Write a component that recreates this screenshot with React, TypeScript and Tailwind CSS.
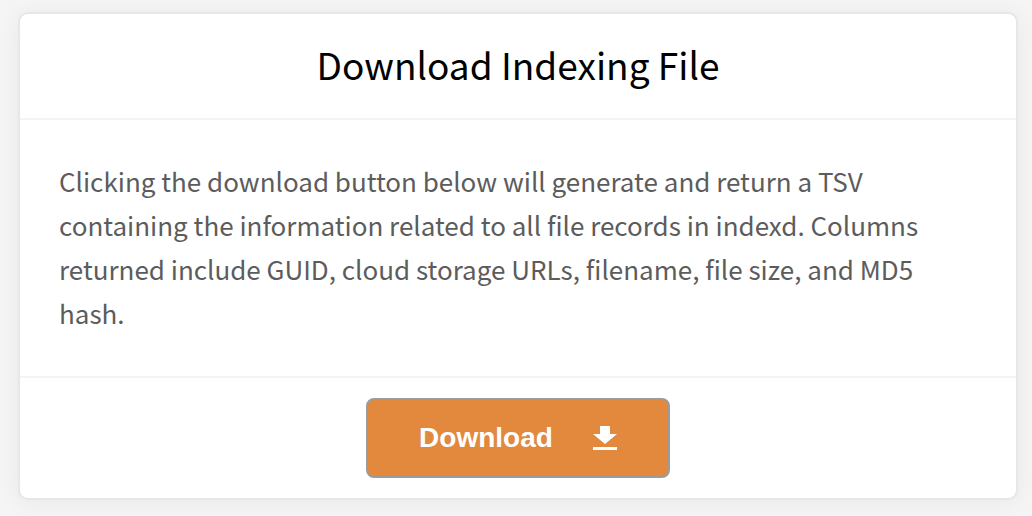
function DownloadIcon() {
  return (
    <svg viewBox="0 0 24 24" className="size-6" fill="currentColor" aria-hidden="true">
      <path d="M7 0h10v8h7L12 18 0 8h7z" />
      <path d="M0 21h24v3H0z" />
    </svg>
  );
}

export default function App() {
  return (
    <main className="min-h-screen bg-[#f5f5f5] pt-3 pr-3.5 pb-4 pl-4.5 font-['Noto_Sans_CJK_SC',sans-serif]">
      <section className="rounded-[10px] border-2 border-[#e7e7e7] bg-white shadow-[0_2px_24px_rgba(0,0,0,0.06)]">
        <h1 className="border-b-2 border-[#f4f4f4] pt-[26px] pb-[30px] text-center text-[37px] leading-[48px] text-black">
          Download Indexing File
        </h1>
        <p className="border-b-2 border-[#f4f4f4] px-[39px] pt-[39px] pb-[41px] text-[26px] leading-[44px] text-[#5c5c5c]">
          Clicking the download button below will generate and return a TSV containing the information related to all file records in indexd. Columns returned include GUID, cloud storage URLs, filename, file size, and MD5 hash.
        </p>
        <div className="flex justify-center py-5">
          <button type="button" className="flex h-20 w-76 items-center justify-center gap-10 rounded-lg border-2 border-[#9b9b9b] bg-[#e2893d] font-['Liberation_Sans',sans-serif] text-[28px] font-bold text-white">
            Download
            <DownloadIcon />
          </button>
        </div>
      </section>
    </main>
  );
}
